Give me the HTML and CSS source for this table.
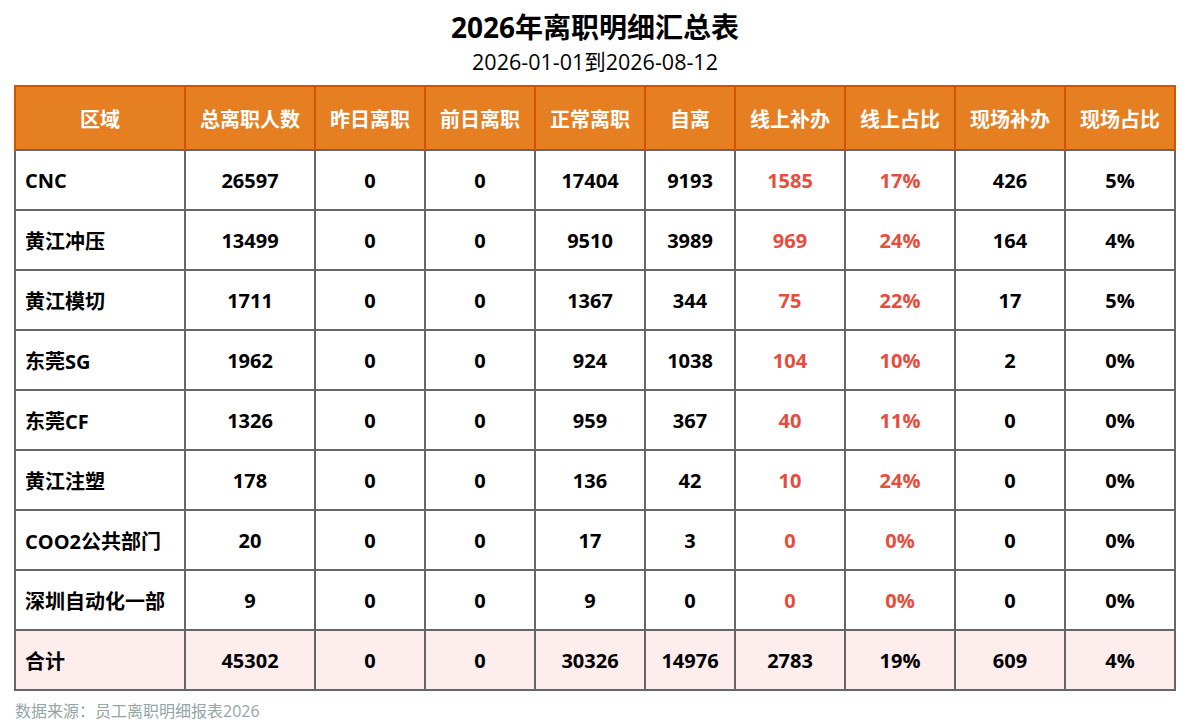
FILE: index.html
```html
<!DOCTYPE html>
<html lang="zh-CN">
<head>
<meta charset="utf-8">
<title>2026年离职明细汇总表</title>
<link rel="stylesheet" href="styles.css">
</head>
<body>
<div class="page">
  <h1 class="title">2026年离职明细汇总表</h1>
  <div class="subtitle">2026-01-01到2026-08-12</div>
  <table class="report">
    <colgroup>
      <col class="c-area"><col class="c-total"><col class="c-std"><col class="c-std"><col class="c-std"><col class="c-self"><col class="c-std"><col class="c-std"><col class="c-std"><col class="c-std">
    </colgroup>
    <thead>
      <tr>
        <th>区域</th><th>总离职人数</th><th>昨日离职</th><th>前日离职</th><th>正常离职</th><th>自离</th><th>线上补办</th><th>线上占比</th><th>现场补办</th><th>现场占比</th>
      </tr>
    </thead>
    <tbody>
      <tr><td class="area">CNC</td><td>26597</td><td>0</td><td>0</td><td>17404</td><td>9193</td><td class="red">1585</td><td class="red">17%</td><td>426</td><td>5%</td></tr>
      <tr><td class="area">黄江冲压</td><td>13499</td><td>0</td><td>0</td><td>9510</td><td>3989</td><td class="red">969</td><td class="red">24%</td><td>164</td><td>4%</td></tr>
      <tr><td class="area">黄江模切</td><td>1711</td><td>0</td><td>0</td><td>1367</td><td>344</td><td class="red">75</td><td class="red">22%</td><td>17</td><td>5%</td></tr>
      <tr><td class="area">东莞SG</td><td>1962</td><td>0</td><td>0</td><td>924</td><td>1038</td><td class="red">104</td><td class="red">10%</td><td>2</td><td>0%</td></tr>
      <tr><td class="area">东莞CF</td><td>1326</td><td>0</td><td>0</td><td>959</td><td>367</td><td class="red">40</td><td class="red">11%</td><td>0</td><td>0%</td></tr>
      <tr><td class="area">黄江注塑</td><td>178</td><td>0</td><td>0</td><td>136</td><td>42</td><td class="red">10</td><td class="red">24%</td><td>0</td><td>0%</td></tr>
      <tr><td class="area">COO2公共部门</td><td>20</td><td>0</td><td>0</td><td>17</td><td>3</td><td class="red">0</td><td class="red">0%</td><td>0</td><td>0%</td></tr>
      <tr><td class="area">深圳自动化一部</td><td>9</td><td>0</td><td>0</td><td>9</td><td>0</td><td class="red">0</td><td class="red">0%</td><td>0</td><td>0%</td></tr>
      <tr class="sum"><td class="area">合计</td><td>45302</td><td>0</td><td>0</td><td>30326</td><td>14976</td><td>2783</td><td>19%</td><td>609</td><td>4%</td></tr>
    </tbody>
  </table>
  <div class="source">数据来源：员工离职明细报表2026</div>
</div>
</body>
</html>
```

FILE: styles.css
```css
html, body {
  margin: 0;
  padding: 0;
  background: #ffffff;
}
body {
  font-family: "Open Sans", "Noto Sans CJK SC", sans-serif;
  color: #000;
}
.page {
  width: 1200px;
  padding: 8px 0 0 14px;
  box-sizing: border-box;
}
.title {
  margin: 0;
  width: 1162px;
  text-align: center;
  font-size: 28px;
  font-weight: 700;
  line-height: 38px;
}
.subtitle {
  width: 1162px;
  text-align: center;
  font-size: 21.5px;
  line-height: 31px;
}
.report {
  margin-top: 8px;
  width: 1162px;
  border-collapse: collapse;
  table-layout: fixed;
}
.c-area { width: 170px; }
.c-total { width: 130px; }
.c-std { width: 110px; }
.c-self { width: 90px; }
.report th {
  background: #e67e22;
  color: #fff;
  font-size: 20px;
  font-weight: 700;
  height: 62px;
  padding: 0;
  border: 2px solid #d35400;
  border-bottom: none;
  text-align: center;
}
.report td {
  border: 2px solid #666;
  height: 58px;
  padding: 0;
  text-align: center;
  font-size: 20px;
  font-weight: 700;
}
.report td.area {
  text-align: left;
  padding-left: 9px;
}
.report td.red {
  color: #e74c3c;
}
.report tr.sum td {
  background: #fdeded;
}
.source {
  margin-top: 9px;
  padding-left: 1px;
  font-size: 16px;
  color: #95a5a6;
  line-height: 22px;
}
```
